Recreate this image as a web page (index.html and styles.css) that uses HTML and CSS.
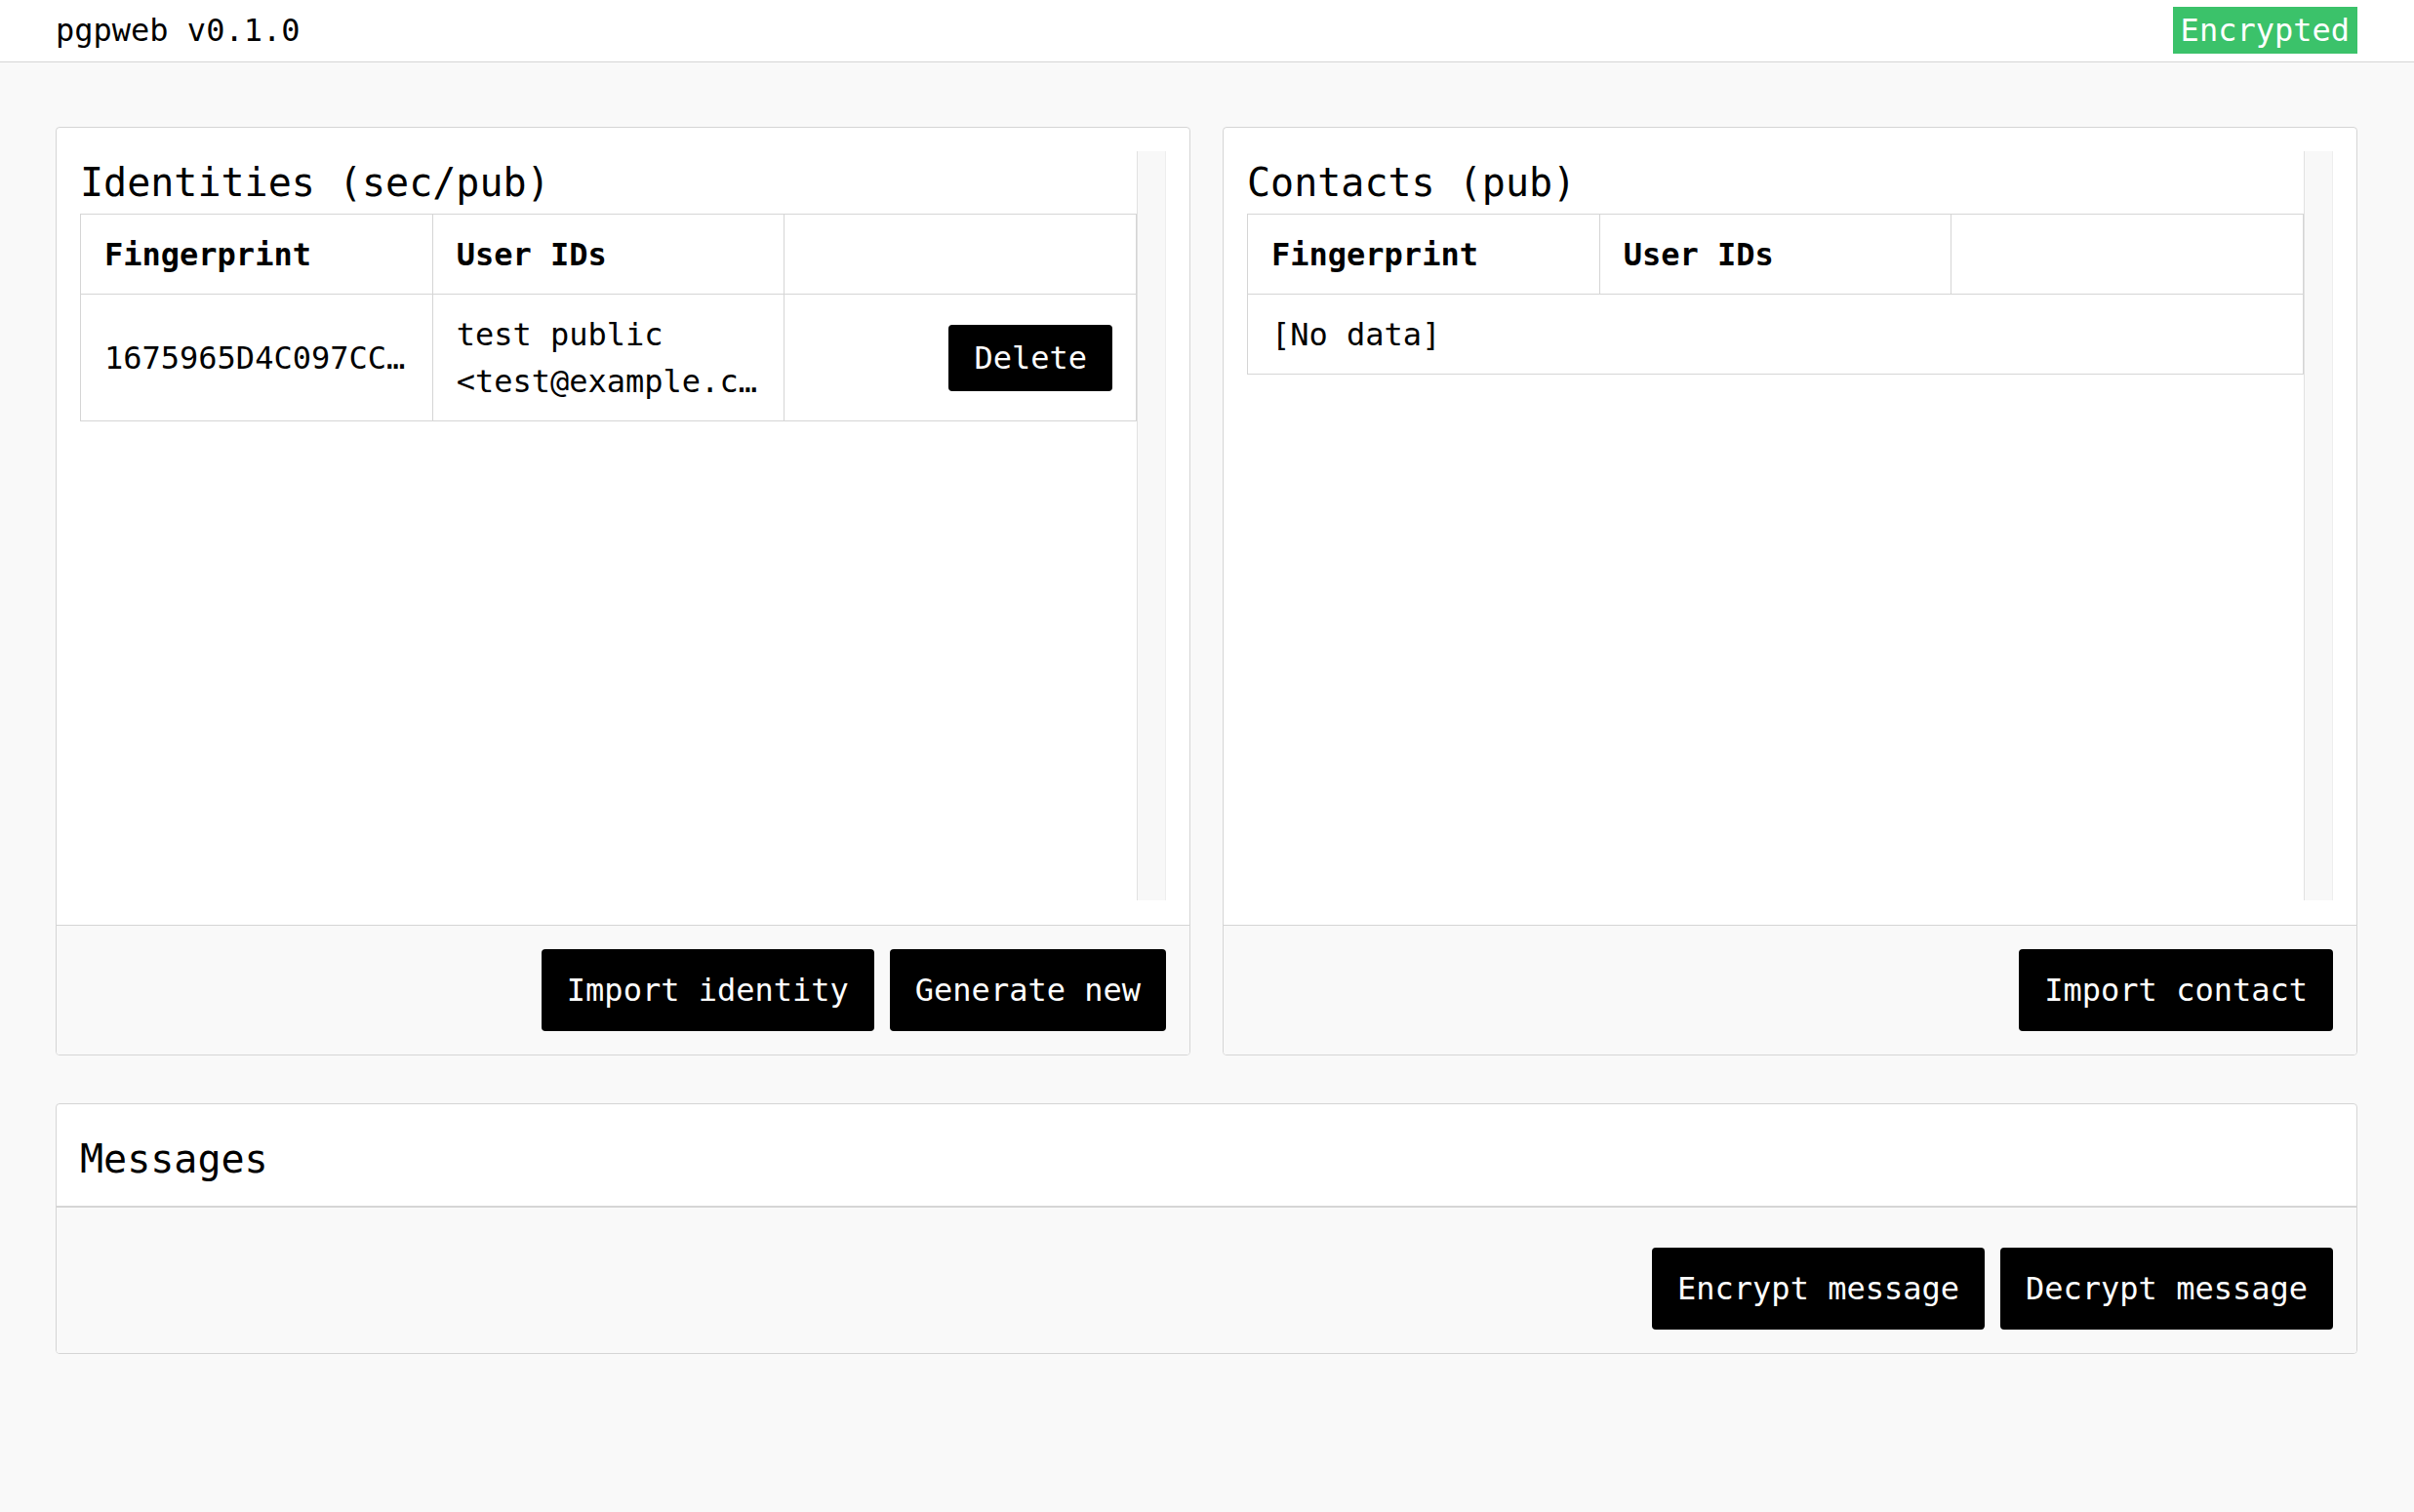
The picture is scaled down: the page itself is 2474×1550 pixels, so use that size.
FILE: index.html
```html
<!DOCTYPE html>
<html lang="en">
<head>
<meta charset="utf-8">
<title>pgpweb v0.1.0</title>
<link rel="stylesheet" href="styles.css">
</head>
<body>
<header class="topbar">
  <span class="brand">pgpweb v0.1.0</span>
  <span class="badge">Encrypted</span>
</header>
<main class="page">
  <div class="columns">
    <section class="panel">
      <div class="panel-main">
        <div class="scroll">
          <div class="scroll-content">
            <h2 class="panel-title">Identities (sec/pub)</h2>
            <table class="keys">
              <thead>
                <tr><th>Fingerprint</th><th>User IDs</th><th></th></tr>
              </thead>
              <tbody>
                <tr>
                  <td><span class="clip">1675965D4C097CC8E1F4B2A3D9C6E7F015A2B3C4</span></td>
                  <td><span class="clip">test public</span><span class="clip">&lt;test@example.com&gt;</span></td>
                  <td class="act"><button class="btn btn-sm">Delete</button></td>
                </tr>
              </tbody>
            </table>
          </div>
          <div class="scroll-track"></div>
        </div>
      </div>
      <div class="panel-foot">
        <button class="btn">Import identity</button>
        <button class="btn">Generate new</button>
      </div>
    </section>
    <section class="panel">
      <div class="panel-main">
        <div class="scroll">
          <div class="scroll-content">
            <h2 class="panel-title">Contacts (pub)</h2>
            <table class="keys">
              <thead>
                <tr><th>Fingerprint</th><th>User IDs</th><th></th></tr>
              </thead>
              <tbody>
                <tr><td colspan="3">[No data]</td></tr>
              </tbody>
            </table>
          </div>
          <div class="scroll-track"></div>
        </div>
      </div>
      <div class="panel-foot">
        <button class="btn">Import contact</button>
      </div>
    </section>
  </div>
  <section class="panel messages">
    <div class="panel-head">
      <h2 class="panel-title">Messages</h2>
    </div>
    <div class="panel-foot foot-tall">
      <button class="btn">Encrypt message</button>
      <button class="btn">Decrypt message</button>
    </div>
  </section>
</main>
</body>
</html>
```

FILE: styles.css
```css
* { box-sizing: border-box; }

html, body {
  margin: 0;
  padding: 0;
}

body {
  background: #f9f9f9;
  color: #000;
  font-family: "DejaVu Sans Mono", "Liberation Mono", monospace;
  font-size: 32px;
  line-height: 48px;
}

.topbar {
  display: flex;
  justify-content: space-between;
  align-items: center;
  background: #fff;
  border-bottom: 1px solid #d5d5d5;
  padding: 7px 58px 8px 57px;
}

.brand {
  font-size: 32px;
  line-height: 48px;
}

.badge {
  background: #3bc26a;
  color: #fff;
  padding: 0 8px;
  line-height: 48px;
}

.page {
  padding: 66px 58px 80px 57px;
}

.columns {
  display: grid;
  grid-template-columns: 1fr 1fr;
  gap: 33px;
}

.panel {
  background: #fff;
  border: 1px solid #d5d5d5;
  border-radius: 4px;
  display: flex;
  flex-direction: column;
  overflow: hidden;
}

.panel-main {
  padding: 24px 24px 25px 24px;
}

.scroll {
  height: 768px;
  display: flex;
}

.scroll-content {
  flex: 1;
  min-width: 0;
}

.scroll-track {
  flex: none;
  width: 30px;
  background: #f8f8f8;
  border-left: 1px solid #e2e2e2;
  border-right: 1px solid #eeeeee;
}

.panel-title {
  margin: 0;
  font-size: 40px;
  line-height: 64px;
  font-weight: 400;
}

.keys {
  width: 100%;
  border-collapse: collapse;
  table-layout: fixed;
}

.keys th,
.keys td {
  border: 1px solid #d5d5d5;
  padding: 17px 24px 16px;
  text-align: left;
  vertical-align: middle;
  line-height: 48px;
}

.keys th {
  font-weight: 700;
}

.clip {
  display: block;
  white-space: nowrap;
  overflow: hidden;
  text-overflow: ellipsis;
}

.keys td.act {
  text-align: right;
}

.panel-foot {
  border-top: 1px solid #d5d5d5;
  background: #f9f9f9;
  padding: 24px;
  display: flex;
  justify-content: flex-end;
  gap: 16px;
}

.foot-tall {
  padding-top: 41px;
}

.btn {
  font-family: inherit;
  font-size: 32px;
  line-height: 48px;
  background: #000;
  color: #fff;
  border: 0;
  border-radius: 4px;
  padding: 18px 26px;
  cursor: pointer;
}

.btn-sm {
  padding: 10px 26px;
  vertical-align: middle;
}

.messages {
  margin-top: 49px;
}

.panel-head {
  padding: 24px 24px 16px;
  border-bottom: 1px solid #d5d5d5;
}
```
